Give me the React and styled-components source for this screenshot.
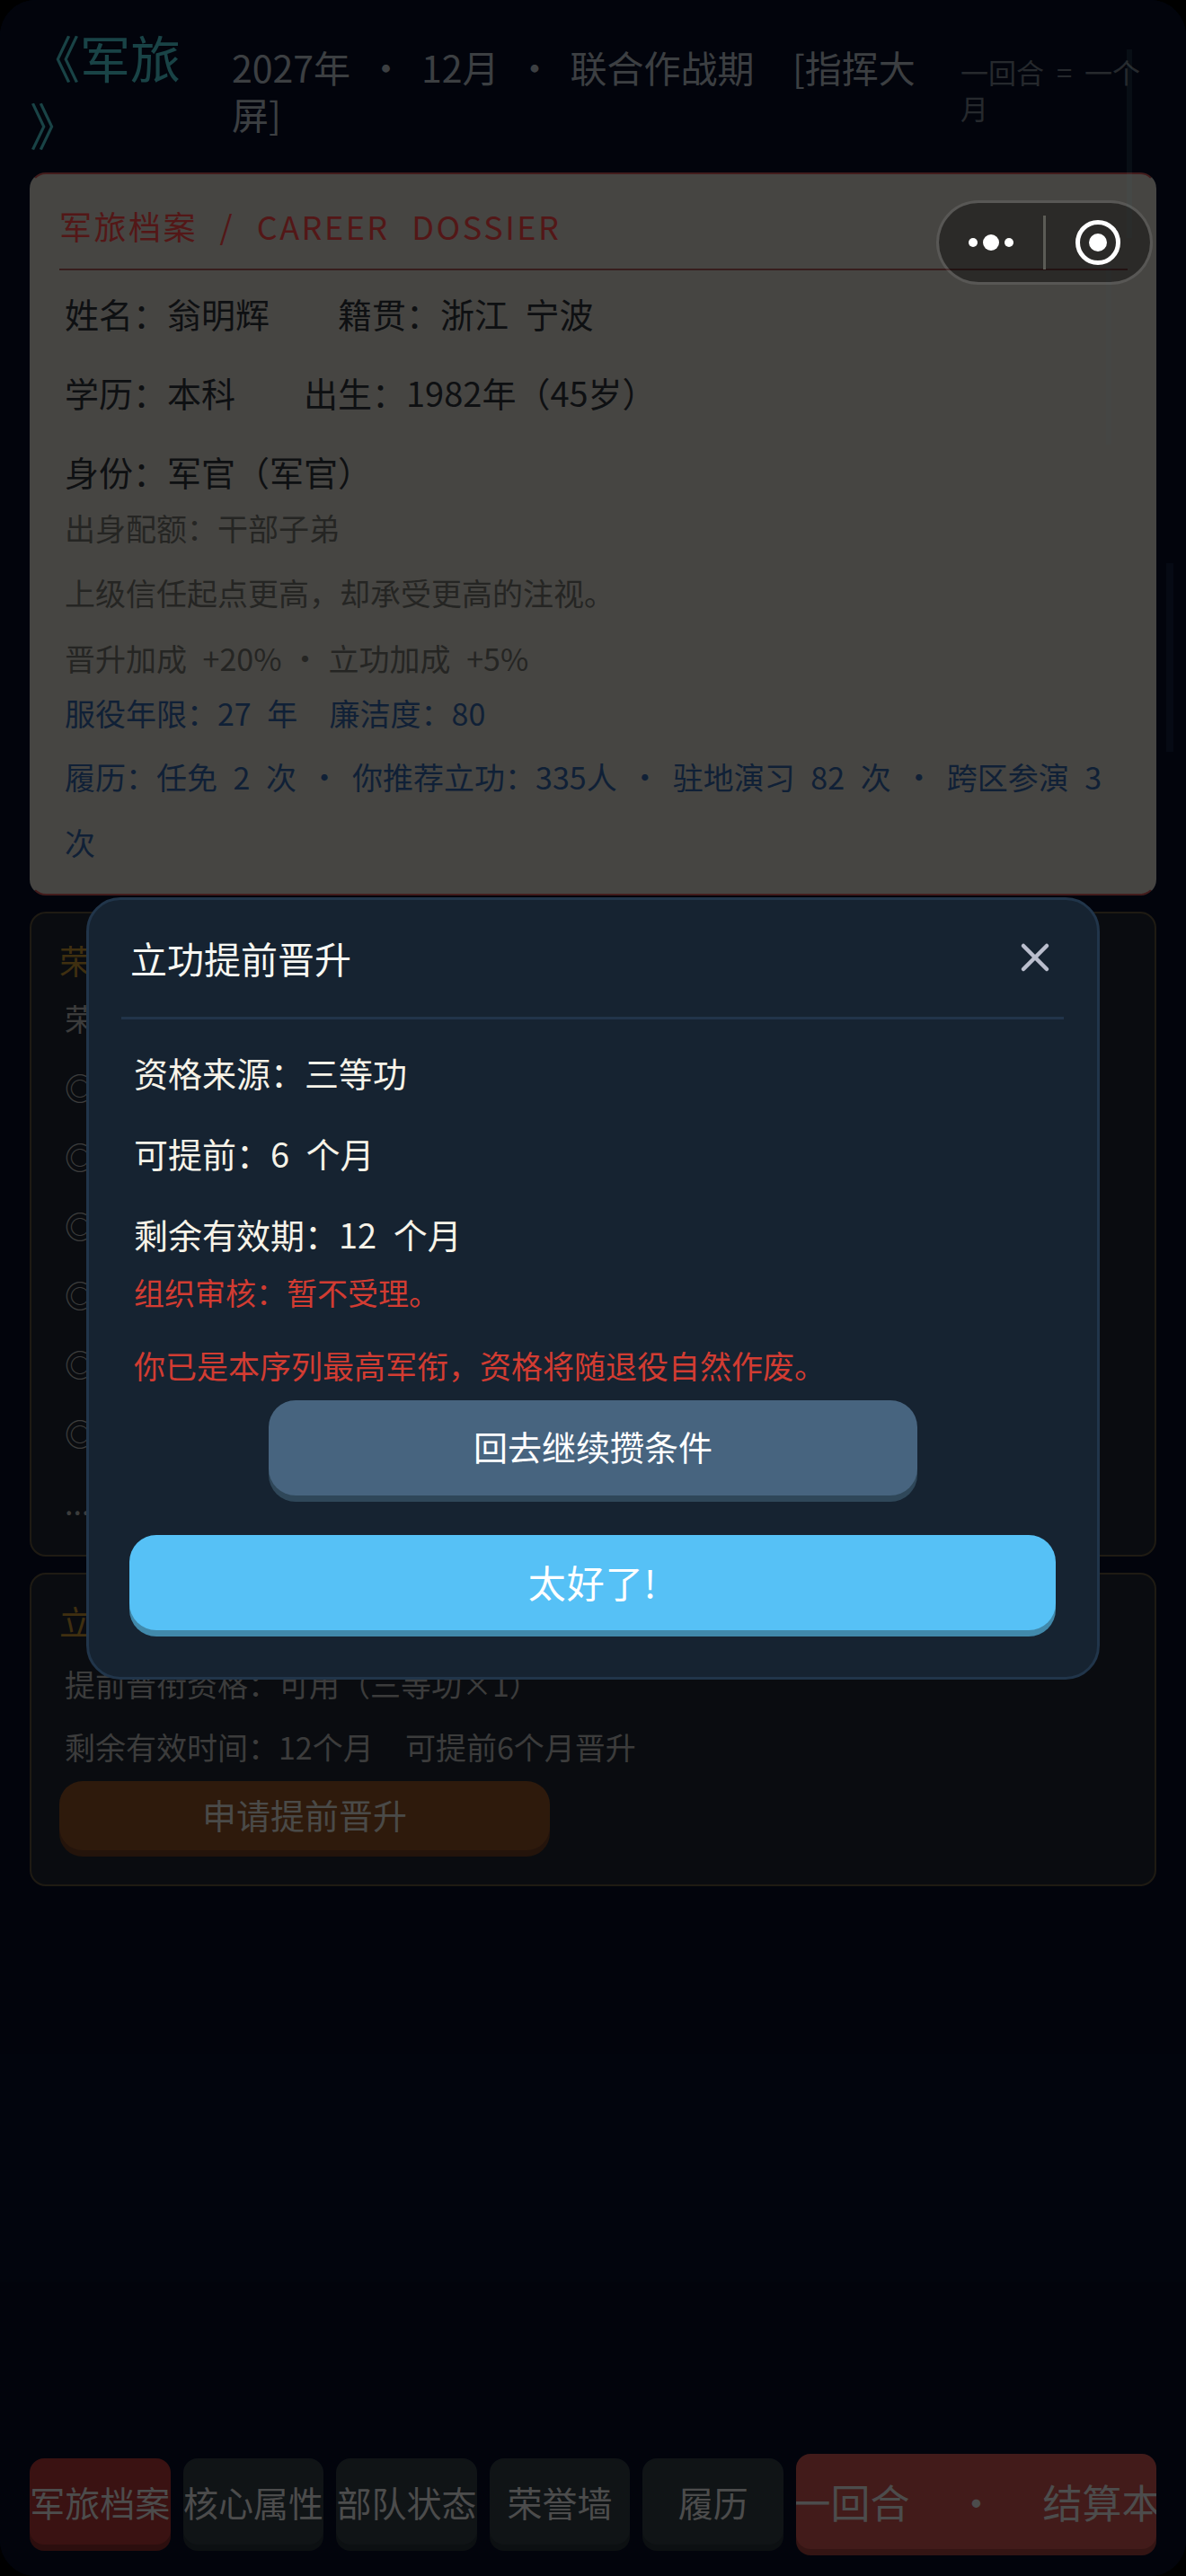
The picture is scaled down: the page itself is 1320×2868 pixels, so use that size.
import React from 'react'
import styled, { createGlobalStyle } from 'styled-components'
import { X } from 'lucide-react'

const GlobalStyle = createGlobalStyle`
  html, body {
    margin: 0;
    padding: 0;
    background: #000;
  }
  * { box-sizing: border-box; }
  body {
    font-family: "Noto Sans CJK SC", "Noto Sans", sans-serif;
  }
`

const Page = styled.div`
  position: relative;
  width: 1320px;
  height: 2868px;
  display: flex;
  flex-direction: column;
  background: #050c20;
  border-radius: 40px;
  overflow: hidden;
`

const Header = styled.header`
  display: flex;
  align-items: center;
  padding: 25px 33px 0;
  margin-bottom: 17px;
`

const GameTitle = styled.h1`
  width: 225px;
  flex: none;
  margin: 0;
  padding-right: 35px;
  font-size: 56px;
  line-height: 75px;
  font-weight: 400;
  color: #3fa8ae;
  line-break: anywhere;
`

const DateLine = styled.div`
  width: 811px;
  flex: none;
  padding-right: 40px;
  font-size: 41px;
  line-height: 52px;
  color: #969ea5;
  white-space: pre-wrap;
  word-spacing: 12px;
`

const TurnNote = styled.div`
  flex: 1;
  font-size: 31px;
  line-height: 40px;
  color: #5f6670;
  white-space: pre-wrap;
`

const Dot = styled.span`
  margin: 0 ${p => p.$gap}px;
`

const Content = styled.main`
  display: flex;
  flex-direction: column;
  gap: 18px;
  padding: 0 33px;
`

const Card = styled.section`
  border-radius: 18px;
  padding: 0 30px 0 31px;
  background: ${p => p.$light ? '#afaca5' : '#192028'};
  border: 2px solid ${p => p.$light ? '#a84848' : '#4f4431'};
  border-left-color: ${p => p.$light ? '#afaca5' : '#4f4431'};
  border-right-color: ${p => p.$light ? '#afaca5' : '#4f4431'};
  height: ${p => p.$height}px;
`

const DossierTitle = styled.h2`
  margin: 0;
  padding: 32px 0 23px;
  font-size: 36px;
  line-height: 50px;
  font-weight: 400;
  letter-spacing: 2.5px;
  word-spacing: 14px;
  color: #d03a3a;
  border-bottom: 2px solid #8a4a4a;
`

const CardTitle = styled.h2`
  margin: 0;
  padding-top: 27px;
  font-size: 37px;
  line-height: 50px;
  font-weight: 400;
  color: #9e7628;
`

const Rows = styled.div`
  padding: 4px 6px 0;
`

const Row = styled.div`
  font-size: ${p => p.$size || 34}px;
  line-height: ${p => p.$lh}px;
  margin-top: ${p => p.$mt || 0}px;
  color: ${p => p.$color || '#5e5e59'};
  white-space: pre-wrap;
  word-spacing: 10px;
`

const Field = styled.span`
  margin-right: 76px;
`

const DullRow = styled(Row)`
  padding-left: 6px;
  color: #969696;
`

const ApplyButton = styled.button`
  display: block;
  width: 546px;
  height: 77px;
  margin-top: 2px;
  padding: 0 0 4px;
  border: 0;
  border-radius: 26px;
  background: #734120;
  box-shadow: 0 7px 0 #5a321c;
  color: #b9b9b4;
  font-family: inherit;
  font-size: 38px;
`

const Footer = styled.footer`
  display: grid;
  grid-template-columns: repeat(5, 1fr) 401px;
  gap: 14px;
  align-items: center;
  margin-top: auto;
  padding: 0 33px 30px;
`

const TabButton = styled.button`
  height: ${p => p.$primary ? 106 : 96}px;
  min-width: 0;
  display: flex;
  align-items: center;
  justify-content: center;
  padding: 0;
  border: 0;
  border-radius: 16px;
  overflow: hidden;
  white-space: pre;
  font-family: inherit;
  font-size: ${p => p.$primary ? 44 : 39}px;
  color: #bebebe;
  background: ${p => p.$primary ? '#a54441' : p.$active ? '#912d2d' : '#283239'};
  box-shadow: 0 7px 0 ${p => p.$primary ? '#823532' : p.$active ? '#6e2323' : '#20282d'};
`

const Overlay = styled.div`
  position: absolute;
  inset: 0;
  display: flex;
  align-items: center;
  justify-content: center;
  background: rgba(0, 0, 0, 0.6);
`

const Modal = styled.div`
  width: 1128px;
  padding: 0 37px 52px 36px;
  background: #162331;
  border: 3px solid #21354a;
  border-radius: 38px;
`

const ModalHead = styled.div`
  display: flex;
  align-items: center;
  justify-content: space-between;
  height: 133px;
  padding: 0 6px 2px 10px;
  border-bottom: 3px solid #21344a;
`

const ModalTitle = styled.h3`
  margin: 0;
  font-size: 41px;
  line-height: 60px;
  font-weight: 400;
  color: #f7f7f2;
`

const CloseButton = styled.button`
  display: flex;
  padding: 0;
  border: 0;
  background: transparent;
  color: #babecd;
`

const ModalBody = styled.div`
  padding: 14px 0 0 14px;
`

const ModalRow = styled.div`
  font-size: 38px;
  line-height: 90px;
  color: #f7f3e8;
  white-space: pre-wrap;
  word-spacing: 10px;
`

const Warning = styled.div`
  font-size: ${p => p.$size}px;
  line-height: 40px;
  margin-top: ${p => p.$mt || 0}px;
  color: #d23c32;
`

const ModalButton = styled.button`
  display: block;
  width: ${p => p.$wide ? 1031 : 722}px;
  height: 106px;
  margin: ${p => p.$wide ? '44px 0 0 9px' : '19px 0 0 164px'};
  padding: 0 0 ${p => p.$wide ? 2 : 5}px;
  border: 0;
  border-radius: 30px;
  font-family: inherit;
  font-size: ${p => p.$wide ? 42 : 38}px;
  letter-spacing: ${p => p.$wide ? 1 : 0}px;
  color: #fff;
  background: ${p => p.$wide ? '#56c1f6' : '#47647f'};
  box-shadow: 0 7px 0 ${p => p.$wide ? '#4189ab' : '#2f4759'};
`

const Capsule = styled.div`
  position: absolute;
  top: 223px;
  left: 1042px;
  width: 241px;
  height: 94px;
  display: flex;
  align-items: center;
  background: rgba(0, 0, 0, 0.38);
  background-clip: padding-box;
  border: 3px solid rgba(255, 255, 255, 0.1);
  border-radius: 47px;
`

const CapsuleSide = styled.div`
  flex: 1;
  display: flex;
  align-items: center;
  justify-content: center;
`

const CapsuleDivider = styled.div`
  width: 3px;
  height: 60px;
  background: #5c5c56;
`

const ScrollTrace = styled.div`
  position: absolute;
  left: ${p => p.$x}px;
  top: ${p => p.$y}px;
  width: ${p => p.$w}px;
  height: ${p => p.$h}px;
  background: ${p => p.$color};
`

const honorRows = [0, 1, 2, 3, 4, 5]

const App = () => {
  return (
    <Page>
      <GlobalStyle />
      <Header>
        <GameTitle>《军旅》</GameTitle>
        <DateLine>2027年<Dot $gap={19}>·</Dot>12月<Dot $gap={19}>·</Dot>{'联合作战期  [指挥大屏]'}</DateLine>
        <TurnNote>{'一回合  =  一个月'}</TurnNote>
      </Header>

      <Content>
        <Card $light $height={805}>
          <DossierTitle>军旅档案 / CAREER DOSSIER</DossierTitle>
          <Rows>
            <Row $size={38} $lh={88} $color="#25282f"><Field>姓名：翁明辉</Field>籍贯：浙江 宁波</Row>
            <Row $size={38} $lh={88} $color="#25282f"><Field>学历：本科</Field>出生：1982年（45岁）</Row>
            <Row $size={38} $lh={88} $color="#25282f">身份：军官（军官）</Row>
            <Row $lh={38}>出身配额：干部子弟</Row>
            <Row $lh={73} $mt={16}>上级信任起点更高，却承受更高的注视。</Row>
            <Row $lh={73}>晋升加成 +20%<Dot $gap={9}>·</Dot>立功加成 +5%</Row>
            <Row $lh={49} $color="#2a5288">{'服役年限：27 年  廉洁度：80'}</Row>
            <Row $lh={73} $mt={10} $color="#2a5288">
              履历：任免 2 次<Dot $gap={14}>·</Dot>你推荐立功：335人<Dot $gap={14}>·</Dot>驻地演习 82 次<Dot $gap={14}>·</Dot>跨区参演 3 次
            </Row>
          </Rows>
        </Card>

        <Card $height={718}>
          <CardTitle>荣誉墙</CardTitle>
          <DullRow $lh={60} $mt={10}>荣</DullRow>
          {honorRows.map((n, i) => (
            <DullRow key={n} $lh={77} $mt={i === 0 ? 8 : 0}>◎</DullRow>
          ))}
          <DullRow $lh={77}>...</DullRow>
        </Card>

        <Card $height={349}>
          <CardTitle>立功提前晋升</CardTitle>
          <DullRow $lh={60} $mt={15}>提前晋衔资格：可用（三等功×1）</DullRow>
          <DullRow $lh={73} $mt={3}>{'剩余有效时间：12个月  可提前6个月晋升'}</DullRow>
          <ApplyButton>申请提前晋升</ApplyButton>
        </Card>
      </Content>

      <Footer>
        <TabButton $active>军旅档案</TabButton>
        <TabButton>核心属性</TabButton>
        <TabButton>部队状态</TabButton>
        <TabButton>荣誉墙</TabButton>
        <TabButton>履历</TabButton>
        <TabButton $primary>下一回合<Dot $gap={52}>·</Dot>结算本月</TabButton>
      </Footer>

      <Overlay>
        <Modal>
          <ModalHead>
            <ModalTitle>立功提前晋升</ModalTitle>
            <CloseButton><X size={52} strokeWidth={2.1} /></CloseButton>
          </ModalHead>
          <ModalBody>
            <ModalRow>资格来源：三等功</ModalRow>
            <ModalRow>可提前：6 个月</ModalRow>
            <ModalRow>剩余有效期：12 个月</ModalRow>
            <Warning $size={34}>组织审核：暂不受理。</Warning>
            <Warning $size={35} $mt={41}>你已是本序列最高军衔，资格将随退役自然作废。</Warning>
          </ModalBody>
          <ModalButton>回去继续攒条件</ModalButton>
          <ModalButton $wide>太好了!</ModalButton>
        </Modal>
      </Overlay>

      <ScrollTrace $x={1254} $y={55} $w={6} $h={210} $color="rgba(70, 110, 110, 0.1)" />
      <ScrollTrace $x={1231} $y={295} $w={6} $h={200} $color="rgba(70, 110, 110, 0.06)" />
      <ScrollTrace $x={1298} $y={627} $w={8} $h={210} $color="rgba(40, 60, 80, 0.12)" />

      <Capsule>
        <CapsuleSide>
          <svg width="50" height="20" viewBox="0 0 50 20">
            <circle cx="5" cy="10" r="5" fill="#fff" />
            <circle cx="25" cy="10" r="9" fill="#fff" />
            <circle cx="45" cy="10" r="5" fill="#fff" />
          </svg>
        </CapsuleSide>
        <CapsuleDivider />
        <CapsuleSide>
          <svg width="52" height="52" viewBox="0 0 52 52">
            <circle cx="26" cy="26" r="22.5" fill="none" stroke="#fff" strokeWidth="5" />
            <circle cx="26" cy="26" r="10" fill="#fff" />
          </svg>
        </CapsuleSide>
      </Capsule>
    </Page>
  )
}

export default App
